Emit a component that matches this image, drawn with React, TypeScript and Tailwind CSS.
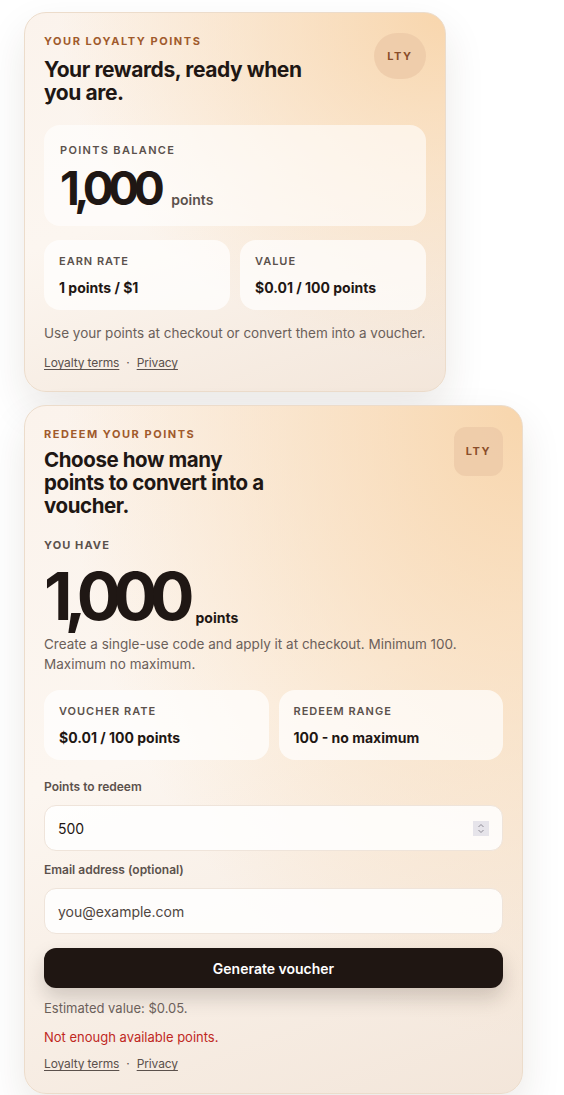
import React, { useState } from 'react';

const cardBg =
    'bg-[radial-gradient(ellipse_at_100%_0%,#f8d6ad_0%,rgba(248,214,173,0.55)_30%,rgba(250,240,230,0)_65%),linear-gradient(160deg,#fbf3ec_0%,#fcf6f0_45%,#f3e6da_100%)]';

const StatBox: React.FC<{ label: string; value: string }> = ({ label, value }) => (
    <div className="rounded-2xl bg-white/70 px-[15px] pt-[14px] pb-[13px]">
        <div className="text-[11px] font-semibold uppercase tracking-[0.09em] text-[#5b514c] leading-[14px]">{label}</div>
        <div className="mt-[11px] text-[14px] font-bold text-[#1f1714] leading-[18px]">{value}</div>
    </div>
);

const Links: React.FC = () => (
    <div className="flex items-center gap-[7px] text-[12px] tracking-[-0.01em] text-[#5b514c] leading-[16px]">
        <a href="#" className="underline underline-offset-2">Loyalty terms</a>
        <span>·</span>
        <a href="#" className="underline underline-offset-2">Privacy</a>
    </div>
);

const App: React.FC = () => {
    const [points, setPoints] = useState('500');
    const [email, setEmail] = useState('');

    return (
        <div className="min-h-screen bg-white px-[24px] pt-[12px] font-['Inter',sans-serif]">
            <div className="flex flex-col gap-[13px]">
                {/* balance card */}
                <section className={`w-[422px] rounded-[22px] border border-[#ecdccb] ${cardBg} px-[19px] pt-[21px] pb-[20px] shadow-[0_18px_40px_rgba(60,40,20,0.10)]`}>
                    <div className="flex items-start justify-between">
                        <div>
                            <div className="text-[11px] font-bold uppercase tracking-[0.14em] text-[#a05a2c] leading-[14px]">Your loyalty points</div>
                            <h1 className="mt-[10px] max-w-[270px] text-[21px] font-bold tracking-[-0.02em] text-[#1f1714] leading-[23px]">
                                Your rewards, ready when you are.
                            </h1>
                        </div>
                        <div className="-mt-[1px] flex h-[46px] w-[52px] items-center justify-center rounded-full bg-[#ecc9a8]/80 text-[11px] font-bold tracking-[0.14em] text-[#8a4e2a]">
                            LTY
                        </div>
                    </div>

                    <div className="mt-[21px] rounded-2xl bg-white/60 px-[16px] pt-[18px] pb-[15px]">
                        <div className="text-[11px] font-semibold uppercase tracking-[0.12em] text-[#5b514c] leading-[14px]">Points balance</div>
                        <div className="mt-[8px] flex items-baseline gap-[12px]">
                            <span className="text-[46px] font-bold tracking-[-0.12em] text-[#1f1714] leading-[46px]">1,000</span>
                            <span className="text-[14px] font-semibold text-[#5b514c]">points</span>
                        </div>
                    </div>

                    <div className="mt-[14px] grid grid-cols-2 gap-[10px]">
                        <StatBox label="Earn rate" value="1 points / $1" />
                        <StatBox label="Value" value="$0.01 / 100 points" />
                    </div>

                    <p className="mt-[13px] text-[13.5px] text-[#6b605a] leading-[20px]">
                        Use your points at checkout or convert them into a voucher.
                    </p>
                    <div className="mt-[12px]">
                        <Links />
                    </div>
                </section>

                {/* redeem card */}
                <section className={`w-[499px] rounded-[22px] border border-[#ecdccb] ${cardBg} px-[19px] pt-[21px] pb-[21px] shadow-[0_18px_40px_rgba(60,40,20,0.10)]`}>
                    <div className="flex items-start justify-between">
                        <div>
                            <div className="text-[11px] font-bold uppercase tracking-[0.14em] text-[#a05a2c] leading-[14px]">Redeem your points</div>
                            <h2 className="mt-[7px] max-w-[235px] text-[20.5px] font-bold tracking-[-0.02em] text-[#1f1714] leading-[23px]">
                                Choose how many points to convert into a voucher.
                            </h2>
                        </div>
                        <div className="flex h-[49px] w-[49px] items-center justify-center rounded-xl bg-[#ecc9a8]/80 text-[11px] font-bold tracking-[0.14em] text-[#8a4e2a]">
                            LTY
                        </div>
                    </div>

                    <div className="mt-[21px] text-[11px] font-bold uppercase tracking-[0.1em] text-[#5b514c] leading-[14px]">You have</div>
                    <div className="mt-[13px] flex items-end gap-[9px]">
                        <span className="text-[66px] font-bold tracking-[-0.12em] text-[#1f1714] leading-[62px]">1,000</span>
                        <span className="mb-[-1px] text-[14px] font-bold text-[#1f1714]">points</span>
                    </div>
                    <p className="mt-[7px] text-[13.5px] text-[#6b605a] leading-[20px]">
                        Create a single-use code and apply it at checkout. Minimum 100. Maximum no maximum.
                    </p>

                    <div className="mt-[16px] grid grid-cols-2 gap-[10px]">
                        <StatBox label="Voucher rate" value="$0.01 / 100 points" />
                        <StatBox label="Redeem range" value="100 - no maximum" />
                    </div>

                    <form className="mt-[19px] flex flex-col" onSubmit={e => e.preventDefault()}>
                        <label className="text-[12px] font-semibold text-[#5b514c] leading-[16px]">Points to redeem</label>
                        <div className="mt-[10px] flex h-[46px] items-center rounded-xl border border-[#efe4da] bg-white/85 pl-[13px] pr-[13px]">
                            <input
                                type="text"
                                value={points}
                                onChange={e => setPoints(e.target.value)}
                                className="flex-1 bg-transparent text-[14px] text-[#1f1714] outline-none"
                            />
                            <span className="flex h-[15px] w-[16px] flex-col items-center justify-center bg-[#e6e4ea]">
                                <svg width="8" height="11" viewBox="0 0 8 11" fill="none" stroke="#8d8a94" strokeWidth="1">
                                    <path d="M1.5 4 L4 1.5 L6.5 4" />
                                    <path d="M1.5 7 L4 9.5 L6.5 7" />
                                </svg>
                            </span>
                        </div>

                        <label className="mt-[11px] text-[12px] font-semibold text-[#5b514c] leading-[16px]">Email address (optional)</label>
                        <input
                            type="email"
                            value={email}
                            onChange={e => setEmail(e.target.value)}
                            placeholder="you@example.com"
                            className="mt-[10px] h-[46px] rounded-xl border border-[#efe4da] bg-white/85 px-[13px] text-[14px] text-[#1f1714] outline-none placeholder:text-[#4f4641]"
                        />

                        <button
                            type="submit"
                            className="mt-[14px] h-[40px] rounded-xl bg-[#1f1612] text-[14px] font-semibold text-white shadow-[0_10px_20px_rgba(31,22,18,0.18)]"
                        >
                            Generate voucher
                        </button>
                    </form>

                    <p className="mt-[11px] text-[13px] text-[#6b605a] leading-[18px]">Estimated value: $0.05.</p>
                    <p className="mt-[11px] text-[13px] text-[#c0281f] leading-[18px]">Not enough available points.</p>
                    <div className="mt-[10px]">
                        <Links />
                    </div>
                </section>
            </div>
        </div>
    );
};

export default App;
